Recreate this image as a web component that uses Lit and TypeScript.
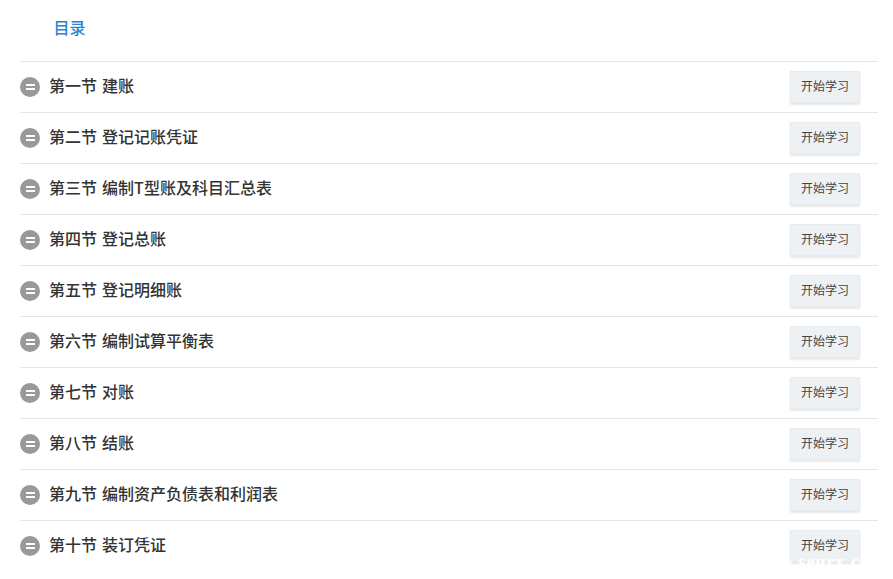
import { LitElement, html, css } from "lit";
import { customElement } from "lit/decorators.js";

const ITEMS = [
  "第一节 建账",
  "第二节 登记记账凭证",
  "第三节 编制T型账及科目汇总表",
  "第四节 登记总账",
  "第五节 登记明细账",
  "第六节 编制试算平衡表",
  "第七节 对账",
  "第八节 结账",
  "第九节 编制资产负债表和利润表",
  "第十节 装订凭证",
];

@customElement("app-root")
export class AppRoot extends LitElement {
  static styles = css`
    :host {
      display: block;
      position: relative;
      width: 893px;
      height: 579px;
      overflow: hidden;
      background: #fff;
      font-family: "Noto Sans CJK SC", "Liberation Sans", sans-serif;
    }
    .wrap {
      padding: 0 15px 0 20px;
    }
    .title {
      height: 61px;
      box-sizing: border-box;
      padding: 16px 0 0 33.5px;
      font-size: 16px;
      line-height: 22px;
      color: #2a82d0;
      font-weight: 500;
    }
    .row {
      display: flex;
      align-items: center;
      height: 51px;
      box-sizing: border-box;
      border-top: 1px solid #e6e6e6;
      padding-right: 18px;
    }
    .dot {
      flex: none;
      width: 20px;
      height: 20px;
      border-radius: 50%;
      background: #999;
      display: flex;
      flex-direction: column;
      align-items: center;
      justify-content: center;
      gap: 2px;
      margin-right: 9px;
    }
    .dot i {
      display: block;
      width: 9px;
      height: 2px;
      background: #fff;
    }
    .name {
      flex: 1;
      font-size: 16px;
      line-height: 22px;
      padding-bottom: 5px;
      font-weight: 500;
      word-spacing: 1.5px;
      color: #333;
    }
    .btn {
      flex: none;
      box-sizing: border-box;
      width: 70px;
      height: 32px;
      background: #eef1f4;
      border: 1px solid #e8ebee;
      box-shadow: 0 2px 2px #e8e8e8;
      font-size: 12px;
      line-height: 28px;
      padding: 0 0 2px;
      text-align: center;
      color: #444;
      font-family: inherit;
    }
    .mark {
      position: absolute;
      left: 780px;
      top: 553px;
      font-family: "Liberation Serif", serif;
      font-weight: 700;
      font-size: 18px;
      line-height: 18px;
      letter-spacing: 1px;
      color: #fff;
      white-space: nowrap;
    }
  `;

  render() {
    return html`
      <div class="wrap">
        <div class="title">目录</div>
        ${ITEMS.map(
          (t) => html`
            <div class="row">
              <span class="dot"><i></i><i></i></span>
              <span class="name">${t}</span>
              <button class="btn">开始学习</button>
            </div>
          `
        )}
      </div>
      <div class="mark">w.seurx.com</div>
    `;
  }
}
